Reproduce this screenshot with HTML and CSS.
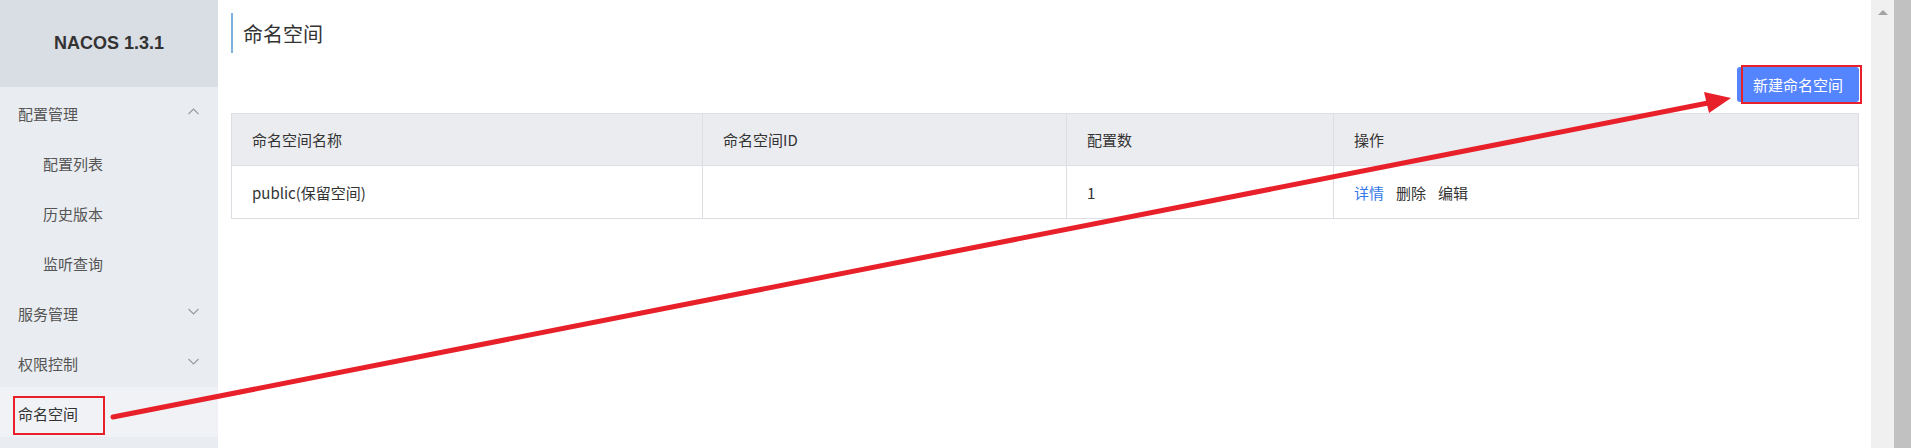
FILE: index.html
```html
<!DOCTYPE html>
<html>

<head>
  <meta charset="utf-8">
  <link rel="stylesheet" href="styles.css">
</head>

<body>
  <div class="layout">
    <div class="sidebar">
      <div class="brand">NACOS 1.3.1</div>
      <ul class="nav">
        <li class="nav-item">配置管理
          <svg class="chev" width="11" height="7" viewBox="0 0 11 7"><polyline points="0.5,6 5.5,1 10.5,6" /></svg>
        </li>
        <li class="nav-item sub">配置列表</li>
        <li class="nav-item sub">历史版本</li>
        <li class="nav-item sub">监听查询</li>
        <li class="nav-item">服务管理
          <svg class="chev" width="11" height="7" viewBox="0 0 11 7"><polyline points="0.5,1 5.5,6 10.5,1" /></svg>
        </li>
        <li class="nav-item">权限控制
          <svg class="chev" width="11" height="7" viewBox="0 0 11 7"><polyline points="0.5,1 5.5,6 10.5,1" /></svg>
        </li>
        <li class="nav-item active">命名空间</li>
      </ul>
    </div>

    <div class="main">
      <div class="page-title">命名空间</div>
      <div class="toolbar">
        <button class="btn-primary">新建命名空间</button>
      </div>
      <table class="grid">
        <colgroup>
          <col class="c1">
          <col class="c2">
          <col class="c3">
          <col>
        </colgroup>
        <thead>
          <tr>
            <th>命名空间名称</th>
            <th>命名空间ID</th>
            <th>配置数</th>
            <th>操作</th>
          </tr>
        </thead>
        <tbody>
          <tr>
            <td>public(保留空间)</td>
            <td></td>
            <td>1</td>
            <td>
              <a class="link link-blue">详情</a><a class="link">删除</a><a class="link">编辑</a>
            </td>
          </tr>
        </tbody>
      </table>
    </div>

    <div class="scroll-track">
      <div class="scroll-up"></div>
    </div>
    <div class="scroll-outer"></div>
  </div>

  <svg class="annot" width="1911" height="448" viewBox="0 0 1911 448">
    <rect x="14" y="397" width="90" height="37" fill="none" stroke="#e8202a" stroke-width="2" />
    <rect x="1742" y="66" width="119" height="37" fill="none" stroke="#e8202a" stroke-width="2" />
    <line x1="113" y1="417" x2="1708" y2="103" stroke="#e8202a" stroke-width="5" stroke-linecap="round" />
    <polygon points="1731,98 1704,92 1709,113" fill="#e8202a" />
  </svg>
</body>

</html>
```

FILE: styles.css
```css
body {
  margin: 0;
  font-family: "Noto Sans CJK SC", "Liberation Sans", sans-serif;
  font-size: 15px;
  color: #333;
  background: #fff;
}

.layout {
  display: flex;
  height: 448px;
  overflow: hidden;
}

.sidebar {
  width: 218px;
  flex-shrink: 0;
  background-color: #e9ecf0;
}

.brand {
  height: 87px;
  display: flex;
  align-items: center;
  justify-content: center;
  background-color: #d9dde4;
  font-family: "Liberation Sans", Arial, sans-serif;
  font-weight: bold;
  font-size: 18px;
  color: #333;
}

.nav {
  list-style: none;
  margin: 0;
  padding: 0;
}

.nav-item {
  height: 50px;
  padding: 2px 18px 0 18px;
  box-sizing: border-box;
  display: flex;
  align-items: center;
  justify-content: space-between;
  color: #555;
}

.nav-item.sub {
  padding-left: 43px;
}

.nav-item.active {
  background-color: #f0f2f6;
  color: #333;
}

.chev {
  margin-right: 1px;
  margin-top: -4px;
}

.chev polyline {
  fill: none;
  stroke: #9a9a9a;
  stroke-width: 1.1;
}

.main {
  flex: 1;
  padding: 13px 12px 0 13px;
  min-width: 0;
}

.page-title {
  height: 40px;
  border-left: 2px solid #7eb0de;
  padding-left: 10px;
  padding-top: 1px;
  box-sizing: border-box;
  display: flex;
  align-items: center;
  font-size: 20px;
  color: #333;
}

.toolbar {
  display: flex;
  justify-content: flex-end;
  margin-top: 14px;
  margin-bottom: 11px;
}

.btn-primary {
  width: 122px;
  height: 35px;
  border: none;
  border-radius: 3px;
  background-color: #5584ff;
  color: #fff;
  font-family: "Noto Sans CJK SC", sans-serif;
  font-size: 15px;
  padding: 0;
}

.grid {
  width: 100%;
  border-collapse: collapse;
  table-layout: fixed;
}

.grid th,
.grid td {
  border: 1px solid #dcdee3;
  text-align: left;
  padding: 0 0 0 20px;
  font-weight: normal;
  color: #333;
}

.grid th {
  height: 51px;
  background-color: #ebecf0;
}

.grid td {
  height: 52px;
}

.grid .c1 { width: 471px; }
.grid .c2 { width: 364px; }
.grid .c3 { width: 267px; }

.link {
  margin-right: 12px;
  color: #333;
  cursor: pointer;
}

.link-blue {
  color: #3579e8;
}

.scroll-track {
  width: 23px;
  flex-shrink: 0;
  background-color: #f0f0f0;
  display: flex;
  justify-content: center;
  padding-top: 10px;
  box-sizing: border-box;
}

.scroll-up {
  width: 0;
  height: 0;
  border-left: 5px solid transparent;
  border-right: 5px solid transparent;
  border-bottom: 5px solid #a3a3a3;
}

.scroll-outer {
  width: 17px;
  flex-shrink: 0;
  background-color: #c1c1c1;
}

.annot {
  position: absolute;
  left: 0;
  top: 0;
  pointer-events: none;
}
```
